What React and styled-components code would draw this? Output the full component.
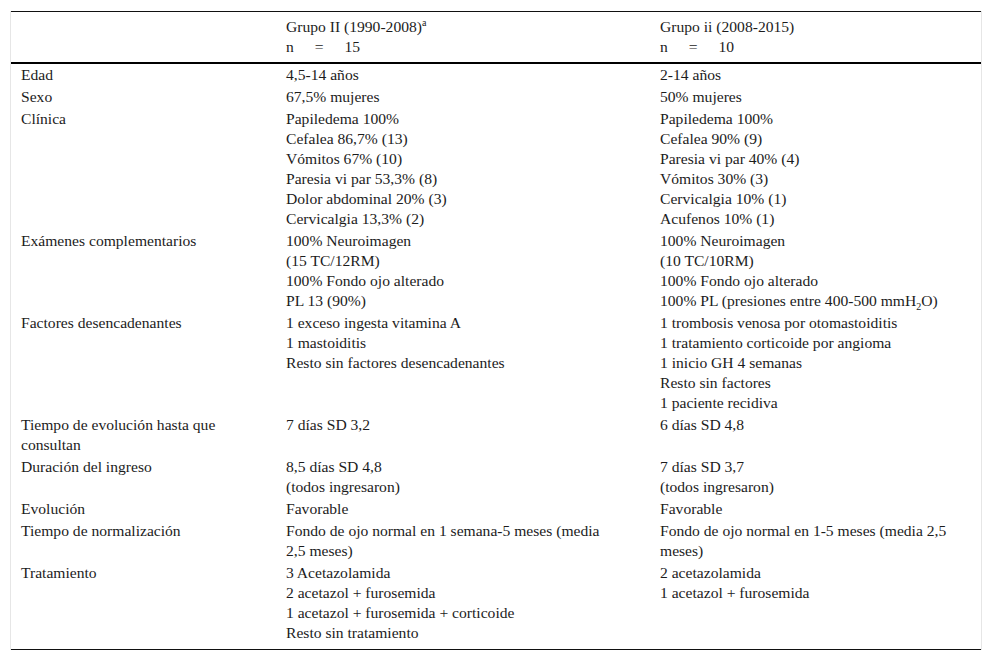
import styled, { createGlobalStyle } from "styled-components";

const GlobalStyle = createGlobalStyle`
  body {
    margin: 0;
    background: #ffffff;
    font-family: "Liberation Serif", "Times New Roman", serif;
  }
`;

const Pagina = styled.div`
  padding: 11px 0 0 10px;
`;

const Moldura = styled.div`
  width: 970px;
  border-left: 1px solid #e6e6e6;
  border-right: 1px solid #e6e6e6;
`;

const Tabela = styled.table`
  width: 970px;
  table-layout: fixed;
  border-collapse: separate;
  border-spacing: 0;
  font-family: "Liberation Serif", "Times New Roman", serif;
  font-size: 15.6px;
  line-height: 20px;
  color: #1c1c1c;
`;

const Cabeca = styled.th`
  text-align: left;
  font-weight: normal;
  vertical-align: top;
  border-top: 1px solid #111;
  border-bottom: 2px solid #000;
  padding: 5px ${(p) => (p.$col === 2 ? "10px" : p.$col === 1 ? "39px" : "30px")} 5px 10px;
`;

const Celula = styled.td`
  vertical-align: top;
  padding: 1px ${(p) => (p.$col === 2 ? "10px" : p.$col === 1 ? "39px" : "30px")}
    ${(p) => (p.$ultima ? "6px" : "1px")} 10px;
  border-bottom: ${(p) => (p.$ultima ? "1px solid #111" : "none")};
`;

const Linha = styled.div`
  min-height: 20px;
`;

const Espacado = styled.span`
  word-spacing: 17px;
`;

const Sup = styled.sup`
  font-size: 10px;
  line-height: 0;
`;

const Sub = styled.sub`
  font-size: 10px;
  line-height: 0;
`;

const filas = [
  { nome: ["Edad"], g1: ["4,5-14 años"], g2: ["2-14 años"] },
  { nome: ["Sexo"], g1: ["67,5% mujeres"], g2: ["50% mujeres"] },
  {
    nome: ["Clínica"],
    g1: [
      "Papiledema 100%",
      "Cefalea 86,7% (13)",
      "Vómitos 67% (10)",
      "Paresia vi par 53,3% (8)",
      "Dolor abdominal 20% (3)",
      "Cervicalgia 13,3% (2)",
    ],
    g2: [
      "Papiledema 100%",
      "Cefalea 90% (9)",
      "Paresia vi par 40% (4)",
      "Vómitos 30% (3)",
      "Cervicalgia 10% (1)",
      "Acufenos 10% (1)",
    ],
  },
  {
    nome: ["Exámenes complementarios"],
    g1: ["100% Neuroimagen", "(15 TC/12RM)", "100% Fondo ojo alterado", "PL 13 (90%)"],
    g2: [
      "100% Neuroimagen",
      "(10 TC/10RM)",
      "100% Fondo ojo alterado",
      <>
        100% PL (presiones entre 400-500 mmH<Sub>2</Sub>O)
      </>,
    ],
  },
  {
    nome: ["Factores desencadenantes"],
    g1: ["1 exceso ingesta vitamina A", "1 mastoiditis", "Resto sin factores desencadenantes"],
    g2: [
      "1 trombosis venosa por otomastoiditis",
      "1 tratamiento corticoide por angioma",
      "1 inicio GH 4 semanas",
      "Resto sin factores",
      "1 paciente recidiva",
    ],
  },
  {
    nome: ["Tiempo de evolución hasta que consultan"],
    g1: ["7 días SD 3,2"],
    g2: ["6 días SD 4,8"],
  },
  {
    nome: ["Duración del ingreso"],
    g1: ["8,5 días SD 4,8", "(todos ingresaron)"],
    g2: ["7 días SD 3,7", "(todos ingresaron)"],
  },
  { nome: ["Evolución"], g1: ["Favorable"], g2: ["Favorable"] },
  {
    nome: ["Tiempo de normalización"],
    g1: ["Fondo de ojo normal en 1 semana-5 meses (media 2,5 meses)"],
    g2: ["Fondo de ojo normal en 1-5 meses (media 2,5 meses)"],
  },
  {
    nome: ["Tratamiento"],
    g1: [
      "3 Acetazolamida",
      "2 acetazol + furosemida",
      "1 acetazol + furosemida + corticoide",
      "Resto sin tratamiento",
    ],
    g2: ["2 acetazolamida", "1 acetazol + furosemida"],
  },
];

export default function App() {
  return (
    <Pagina>
      <GlobalStyle />
      <Moldura>
        <Tabela>
          <colgroup>
            <col style={{ width: 265 }} />
            <col style={{ width: 374 }} />
            <col style={{ width: 331 }} />
          </colgroup>
          <thead>
            <tr>
              <Cabeca $col={0}></Cabeca>
              <Cabeca $col={1}>
                <Linha>
                  Grupo II (1990-2008)<Sup>a</Sup>
                </Linha>
                <Linha>
                  <Espacado>n = 15</Espacado>
                </Linha>
              </Cabeca>
              <Cabeca $col={2}>
                <Linha>Grupo ii (2008-2015)</Linha>
                <Linha>
                  <Espacado>n = 10</Espacado>
                </Linha>
              </Cabeca>
            </tr>
          </thead>
          <tbody>
            {filas.map((fila, i) => {
              const ultima = i === filas.length - 1;
              return (
                <tr key={i}>
                  {[fila.nome, fila.g1, fila.g2].map((linhas, c) => (
                    <Celula key={c} $col={c} $ultima={ultima}>
                      {linhas.map((l, k) => (
                        <Linha key={k}>{l}</Linha>
                      ))}
                    </Celula>
                  ))}
                </tr>
              );
            })}
          </tbody>
        </Tabela>
      </Moldura>
    </Pagina>
  );
}
